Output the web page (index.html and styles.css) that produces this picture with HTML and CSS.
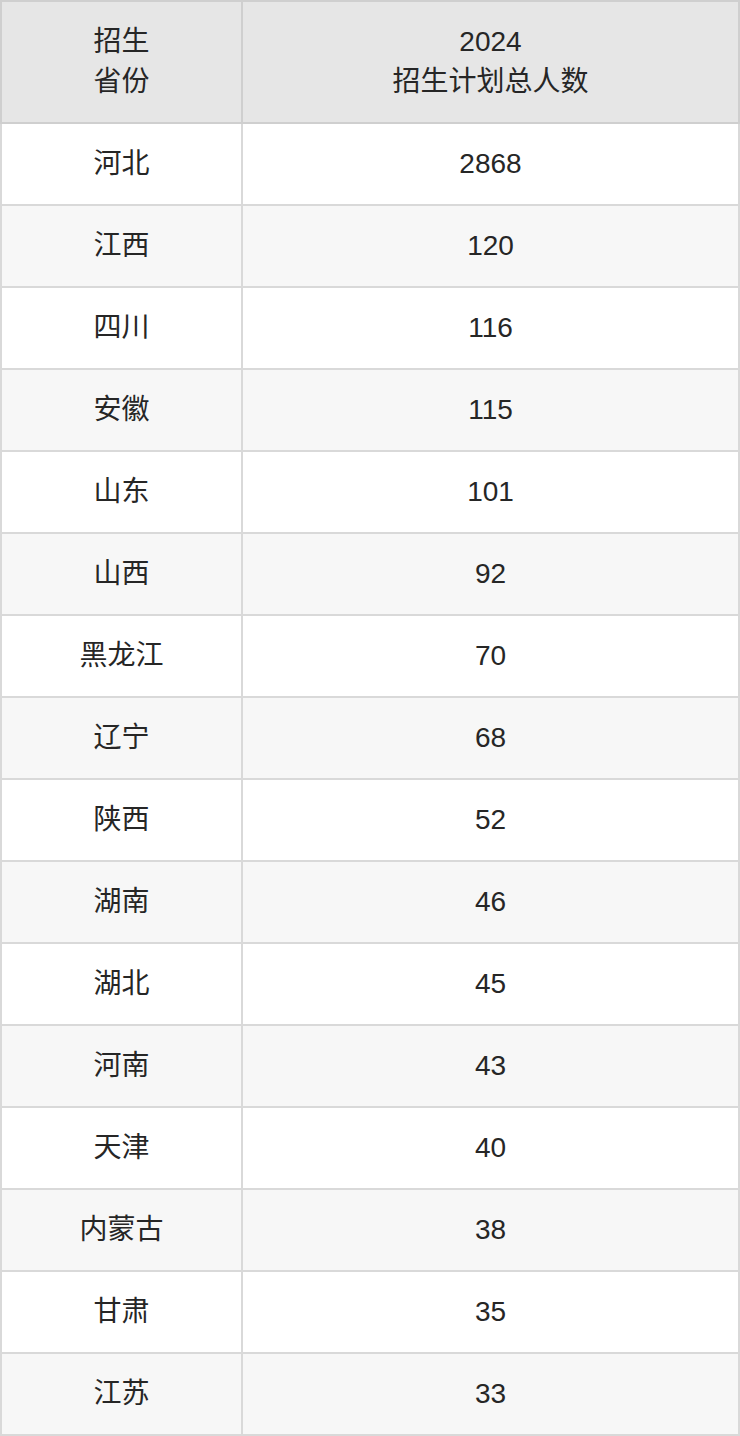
FILE: index.html
```html
<!DOCTYPE html>
<html lang="zh">
<head>
<meta charset="utf-8">
<link rel="stylesheet" href="styles.css">
</head>
<body>
<table class="plan">
  <colgroup><col class="c-prov"><col class="c-num"></colgroup>
  <thead>
    <tr><th>招生<br>省份</th><th>2024<br>招生计划总人数</th></tr>
  </thead>
  <tbody>
    <tr><td>河北</td><td>2868</td></tr>
    <tr><td>江西</td><td>120</td></tr>
    <tr><td>四川</td><td>116</td></tr>
    <tr><td>安徽</td><td>115</td></tr>
    <tr><td>山东</td><td>101</td></tr>
    <tr><td>山西</td><td>92</td></tr>
    <tr><td>黑龙江</td><td>70</td></tr>
    <tr><td>辽宁</td><td>68</td></tr>
    <tr><td>陕西</td><td>52</td></tr>
    <tr><td>湖南</td><td>46</td></tr>
    <tr><td>湖北</td><td>45</td></tr>
    <tr><td>河南</td><td>43</td></tr>
    <tr><td>天津</td><td>40</td></tr>
    <tr><td>内蒙古</td><td>38</td></tr>
    <tr><td>甘肃</td><td>35</td></tr>
    <tr><td>江苏</td><td>33</td></tr>
  </tbody>
</table>
</body>
</html>
```
FILE: styles.css
```css
html, body {
  margin: 0;
  padding: 0;
  background: #ffffff;
}
.plan {
  width: 740px;
  border-collapse: collapse;
  table-layout: fixed;
  font-family: "Liberation Sans", "Noto Sans CJK SC", sans-serif;
  font-size: 28px;
  color: #262626;
}
.c-prov { width: 241px; }
.plan th, .plan td {
  border: 2px solid #d9d9d9;
  text-align: center;
  vertical-align: middle;
  padding: 0;
  font-weight: normal;
}
.plan th {
  background: #e6e6e6;
  height: 120px;
  line-height: 40px;
  border-color: #cfcfcf;
}
.plan td {
  height: 80px;
  line-height: 40px;
}
.plan tbody tr:nth-child(even) td {
  background: #f7f7f7;
}
```
